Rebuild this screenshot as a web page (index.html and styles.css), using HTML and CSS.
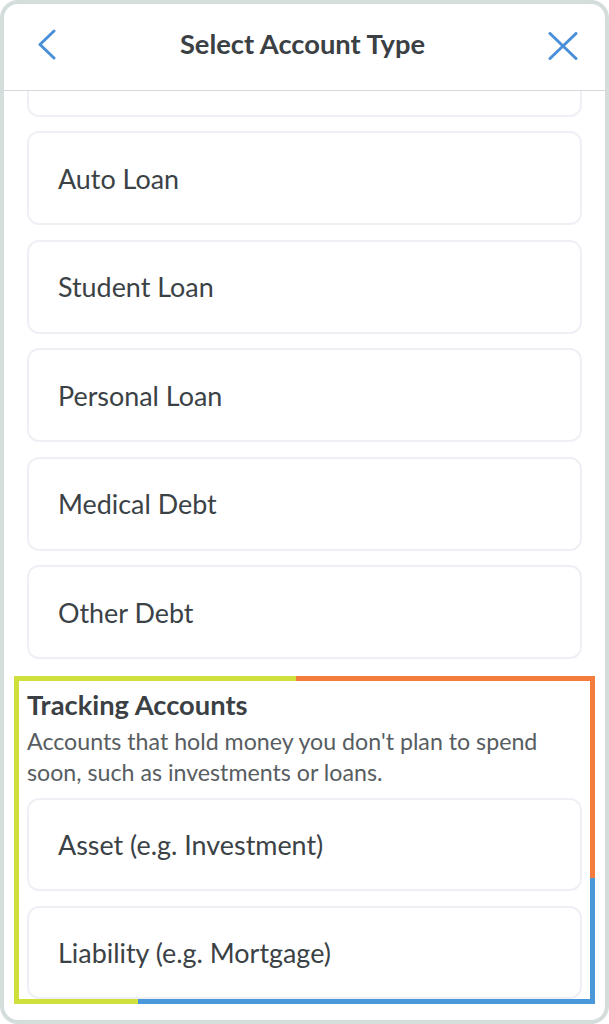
FILE: index.html
```html
<!DOCTYPE html>
<html lang="en">
<head>
<meta charset="utf-8">
<title>Select Account Type</title>
<link rel="stylesheet" href="styles.css">
</head>
<body>
<div class="frame">
  <header class="header">
    <button class="icon-btn back" aria-label="Back">
      <svg width="20" height="31" viewBox="0 0 20 31"><polyline points="17,2 3,15.5 17,29" fill="none" stroke="#4a90d9" stroke-width="3" stroke-linecap="round" stroke-linejoin="round"/></svg>
    </button>
    <h1 class="title">Select Account Type</h1>
    <button class="icon-btn close" aria-label="Close">
      <svg width="30" height="28" viewBox="0 0 30 28"><path d="M2 1.5 L28 26.5 M28 1.5 L2 26.5" fill="none" stroke="#4a90d9" stroke-width="3" stroke-linecap="round"/></svg>
    </button>
  </header>
  <div class="scroll">
    <div class="list">
      <div class="card first" aria-hidden="true"></div>
      <div class="card">Auto Loan</div>
      <div class="card">Student Loan</div>
      <div class="card">Personal Loan</div>
      <div class="card">Medical Debt</div>
      <div class="card">Other Debt</div>
      <section class="tracking">
        <h2 class="section-title">Tracking Accounts</h2>
        <p class="section-desc">Accounts that hold money you don't plan to spend soon, such as investments or loans.</p>
        <div class="card">Asset (e.g. Investment)</div>
        <div class="card last">Liability (e.g. Mortgage)</div>
      </section>
    </div>
  </div>
</div>
</body>
</html>
```

FILE: styles.css
```css
html, body {
  margin: 0;
  padding: 0;
  background: #ffffff;
}

body {
  font-family: Lato, "Open Sans", "Liberation Sans", sans-serif;
  color: #3b4246;
}

.frame {
  width: 609px;
  height: 1024px;
  box-sizing: border-box;
  border: 4px solid #d5dcdc;
  border-radius: 18px;
  overflow: hidden;
  display: flex;
  flex-direction: column;
  background: #ffffff;
}

.header {
  height: 87px;
  flex: none;
  box-sizing: border-box;
  border-bottom: 1px solid #d6d8d9;
  display: flex;
  align-items: center;
  justify-content: space-between;
  padding: 0 27px 5px 33px;
}

.icon-btn {
  border: 0;
  background: none;
  padding: 0;
  display: flex;
  align-items: center;
  justify-content: center;
}

.back {
  width: 20px;
  height: 31px;
}

.close {
  width: 30px;
  height: 28px;
  margin-top: 2px;
}

.title {
  margin: 0;
  font-size: 27.3px;
  font-weight: 700;
  color: #3a4044;
  line-height: 1.2;
}

.scroll {
  flex: 1;
  overflow: hidden;
  padding: 0 23px;
}

.list {
  display: flex;
  flex-direction: column;
}

.card {
  height: 94px;
  flex: none;
  box-sizing: border-box;
  border: 2px solid #eff0f5;
  border-radius: 12px;
  display: flex;
  align-items: center;
  padding-left: 29px;
  font-size: 26.9px;
  color: #3b4246;
  margin-bottom: 14.5px;
}

.card.first {
  margin-top: -68.5px;
}

.tracking {
  margin: 2.5px -13px 0;
  padding: 13.5px 13px 5px;
  display: flex;
  flex-direction: column;
  background:
    linear-gradient(to right, #cfdf3b 0 48.6%, #f47d3e 48.6% 100%) top / 100% 5px no-repeat,
    linear-gradient(to bottom, #f47d3e 0 61.5%, #4a98da 61.5% 100%) right / 5px 100% no-repeat,
    linear-gradient(to right, #cfdf3b 0 21.3%, #4a98da 21.3% 100%) bottom / 100% 5px no-repeat,
    linear-gradient(#cfdf3b, #cfdf3b) left / 5px 100% no-repeat;
}

.section-title {
  margin: 0;
  font-size: 27.3px;
  font-weight: 700;
  line-height: 30px;
  color: #3a4044;
}

.section-desc {
  margin: 6.5px 0 10px;
  font-size: 23.2px;
  line-height: 31px;
  color: #575d61;
}

.tracking .card {
  height: 93px;
  margin-bottom: 15px;
}

.tracking .card.last {
  margin-bottom: 0;
}
```
